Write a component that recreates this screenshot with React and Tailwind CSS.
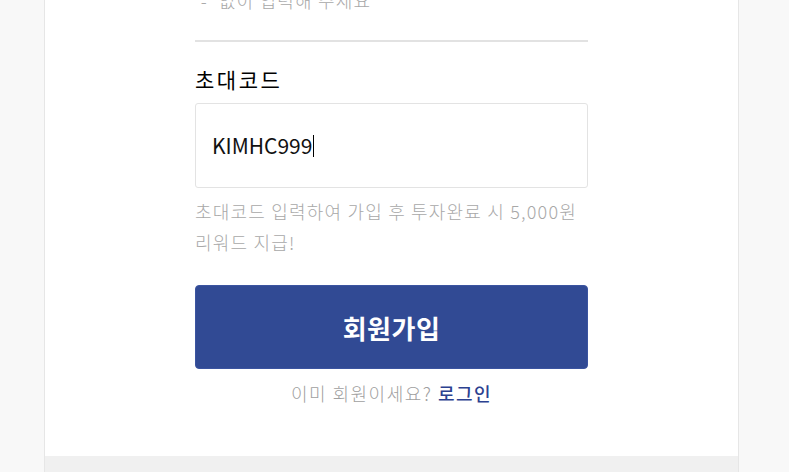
export default function App() {
  const font = { fontFamily: '"Noto Sans CJK KR", "Noto Sans", sans-serif' };
  return (
    <div
      className="h-[472px] overflow-hidden bg-[#f8f8f8] flex"
      style={font}
    >
      <div className="ml-[44px] w-[695px] h-full flex flex-col border-x border-[#e6e6e6] bg-white">
        <div className="flex-1 flex justify-center">
          <div className="w-[393px] flex flex-col">
            {/* phone hint (cut off at top) */}
            <p className="mt-[-15px] text-[18px] leading-[31px] tracking-[1.2px] font-light text-[#a8a8a8] whitespace-nowrap">
              '-' 없이 입력해 주세요
            </p>
            <div className="mt-[24px] border-t-2 border-[#e2e2e2]" />

            <label className="mt-[22px] text-[21px] leading-[30px] tracking-[2.5px] text-black">
              초대코드
            </label>
            <div className="mt-[9px] h-[85px] flex items-center rounded-[3px] border border-[#e3e3e3] bg-white pl-[16px]">
              <span className="text-[21px] text-[#111]">KIMHC999</span>
              <span className="ml-[1px] h-[22px] w-px bg-black" />
            </div>
            <p className="mt-[8px] text-[18px] leading-[31px] tracking-[1.2px] font-light text-[#a8a8a8] whitespace-nowrap">
              초대코드 입력하여 가입 후 투자완료 시 5,000원
              <br />
              리워드 지급!
            </p>

            <button className="mt-[27px] h-[84px] rounded-[4px] border border-[#3b54a0] bg-[#314a94] text-[26px] font-bold tracking-[0.5px] text-white">
              회원가입
            </button>

            <p className="mt-[9px] text-center text-[18px] leading-[31px] tracking-[1.5px] font-light text-[#a0a0a0]">
              이미 회원이세요?{" "}
              <a className="font-medium text-[#2c4190]">로그인</a>
            </p>
          </div>
        </div>
        <div className="h-[16px] bg-[#f0f0f0]" />
      </div>
    </div>
  );
}
